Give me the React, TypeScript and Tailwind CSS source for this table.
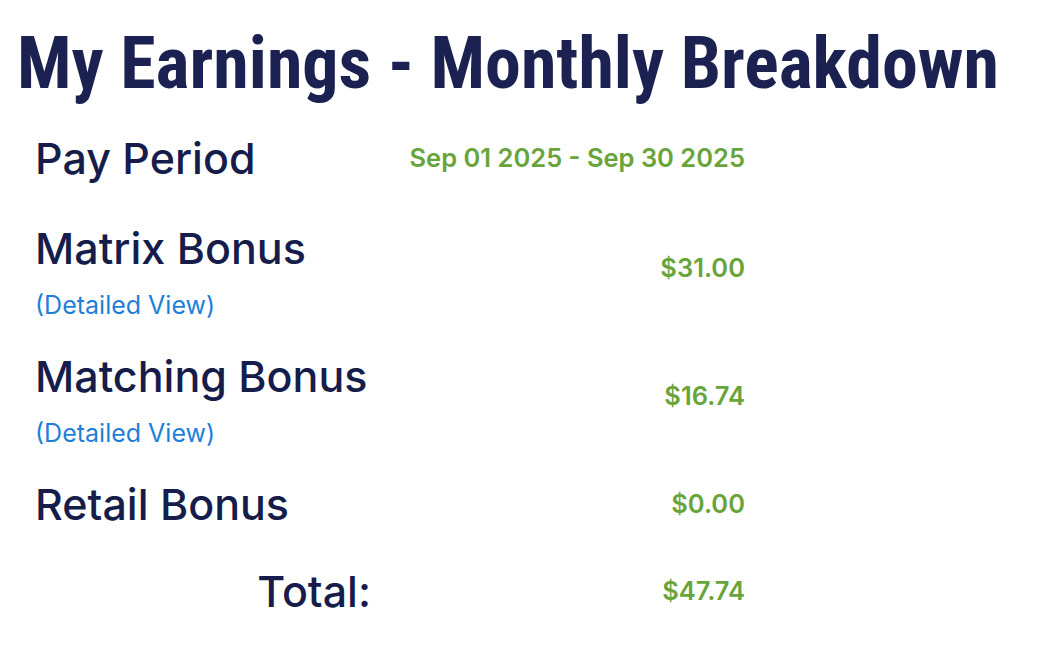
type Row = { label: string; amount: string; detail: boolean; top: string };

const rows: Row[] = [
  { label: "Matrix Bonus", amount: "$31.00", detail: true, top: "mt-[42px]" },
  { label: "Matching Bonus", amount: "$16.74", detail: true, top: "mt-[31px]" },
  { label: "Retail Bonus", amount: "$0.00", detail: false, top: "mt-[31px]" },
];

export default function App() {
  return (
    <div className="min-h-screen bg-white px-[17px] pt-[22px]">
      <h1 className="font-['Roboto',sans-serif] font-bold font-stretch-condensed text-[72px] leading-[84px] text-[#1b2150] whitespace-nowrap">
        My Earnings - Monthly Breakdown
      </h1>
      <div className="flex flex-col pl-[18px] mt-[28px] font-['Inter',sans-serif]">
        <div className="grid grid-cols-[336px_374px]">
          <div className="text-[43px] leading-[48px] font-[550] text-[#161d4a] whitespace-nowrap">
            Pay Period
          </div>
          <div className="flex items-center justify-end text-[25.5px] font-semibold text-[#68a43b] whitespace-nowrap">
            Sep 01 2025 - Sep 30 2025
          </div>
        </div>
        {rows.map((r) => (
          <div key={r.label} className={`grid grid-cols-[336px_374px] ${r.top}`}>
            <div>
              <div className="text-[43px] leading-[48px] font-[550] text-[#161d4a] whitespace-nowrap">
                {r.label}
              </div>
              {r.detail && (
                <a href="#" className="block mt-[17px] text-[25px] leading-[32px] text-[#1e7fd8]">
                  (Detailed View)
                </a>
              )}
            </div>
            <div
              className={`flex items-center justify-end text-[25.5px] font-semibold text-[#68a43b] ${
                r.detail ? "pb-[8px]" : ""
              }`}
            >
              {r.amount}
            </div>
          </div>
        ))}
        <div className="grid grid-cols-[336px_374px] mt-[39px]">
          <div className="text-right text-[43px] leading-[48px] font-[550] text-[#161d4a]">
            Total:
          </div>
          <div className="flex items-center justify-end text-[25.5px] font-semibold text-[#68a43b]">
            $47.74
          </div>
        </div>
      </div>
    </div>
  );
}
